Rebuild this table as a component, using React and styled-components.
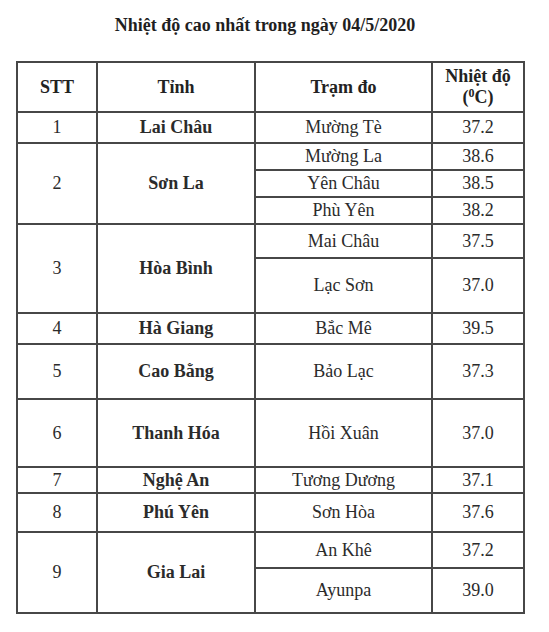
import React from "react";
import styled, { createGlobalStyle } from "styled-components";

const serif = `"Liberation Serif", "Times New Roman", Times, serif`;

const Global = createGlobalStyle`
  *, *::before, *::after { box-sizing: border-box; }
  html, body { margin: 0; padding: 0; background: #ffffff; }
  body { font-family: ${serif}; color: #222; }
  table, th, td { font-family: ${serif}; }
`;

const Page = styled.div`
  padding: 15px 0 0 16px;
  font-family: ${serif};
`;

const Title = styled.h2`
  margin: 0;
  width: 498px;
  text-align: center;
  font-family: ${serif};
  font-size: 18px;
  line-height: 20px;
  font-weight: bold;
  color: #1f1f1f;
`;

const Table = styled.table`
  margin-top: 26px;
  width: 509px;
  table-layout: fixed;
  border-collapse: separate;
  border-spacing: 0;
  border-top: 2px solid #474747;
  border-left: 2px solid #474747;
  font-family: ${serif};
  font-size: 18px;
`;

const Row = styled.tr`
  height: ${(p) => p.$h}px;
`;

const Cell = styled.td`
  padding: 0;
  border-right: 2px solid #474747;
  border-bottom: 2px solid #474747;
  text-align: center;
  vertical-align: middle;
  font-family: ${serif};
  font-size: 18px;
  font-weight: ${(p) => (p.$bold ? "bold" : "normal")};
  color: #2b2b2b;
`;

const HeadCell = styled.th`
  padding: 0;
  border-right: 2px solid #474747;
  border-bottom: 2px solid #474747;
  text-align: center;
  vertical-align: middle;
  font-family: ${serif};
  font-size: 18px;
  font-weight: bold;
  line-height: 21px;
  color: #222;
  width: ${(p) => p.$w}px;
`;

const Sup = styled.sup`
  font-size: 12px;
  line-height: 0;
  vertical-align: 6px;
`;

const groups = [
  { stt: "1", tinh: "Lai Châu", rows: [["Mường Tè", "37.2", 31]] },
  {
    stt: "2",
    tinh: "Sơn La",
    rows: [
      ["Mường La", "38.6", 27],
      ["Yên Châu", "38.5", 27],
      ["Phù Yên", "38.2", 27],
    ],
  },
  {
    stt: "3",
    tinh: "Hòa Bình",
    rows: [
      ["Mai Châu", "37.5", 34],
      ["Lạc Sơn", "37.0", 55],
    ],
  },
  { stt: "4", tinh: "Hà Giang", rows: [["Bắc Mê", "39.5", 31]] },
  { stt: "5", tinh: "Cao Bằng", rows: [["Bảo Lạc", "37.3", 55]] },
  { stt: "6", tinh: "Thanh Hóa", rows: [["Hồi Xuân", "37.0", 68]] },
  { stt: "7", tinh: "Nghệ An", rows: [["Tương Dương", "37.1", 26]] },
  { stt: "8", tinh: "Phú Yên", rows: [["Sơn Hòa", "37.6", 39]] },
  {
    stt: "9",
    tinh: "Gia Lai",
    rows: [
      ["An Khê", "37.2", 36],
      ["Ayunpa", "39.0", 45],
    ],
  },
];

export default function App() {
  return (
    <>
      <Global />
      <Page>
        <Title>Nhiệt độ cao nhất trong ngày 04/5/2020</Title>
        <Table>
          <thead>
            <Row $h={50}>
              <HeadCell $w={80}>STT</HeadCell>
              <HeadCell $w={158}>Tỉnh</HeadCell>
              <HeadCell $w={177}>Trạm đo</HeadCell>
              <HeadCell $w={92}>
                Nhiệt độ
                <br />
                (<Sup>0</Sup>C)
              </HeadCell>
            </Row>
          </thead>
          <tbody>
            {groups.map((g) =>
              g.rows.map((r, i) => (
                <Row key={g.stt + "-" + i} $h={r[2]}>
                  {i === 0 && (
                    <>
                      <Cell rowSpan={g.rows.length}>{g.stt}</Cell>
                      <Cell rowSpan={g.rows.length} $bold>
                        {g.tinh}
                      </Cell>
                    </>
                  )}
                  <Cell>{r[0]}</Cell>
                  <Cell>{r[1]}</Cell>
                </Row>
              ))
            )}
          </tbody>
        </Table>
      </Page>
    </>
  );
}
